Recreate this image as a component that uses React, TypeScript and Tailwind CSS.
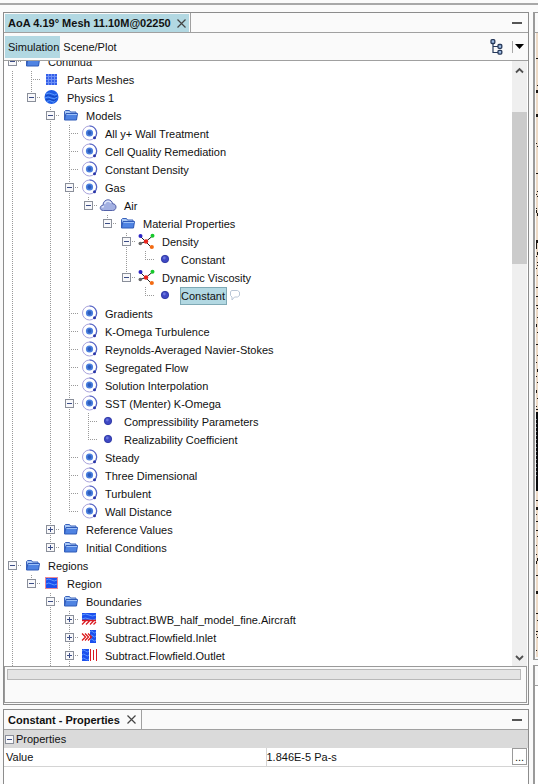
import React, { useState } from "react";

type IconName =
  | "folder" | "mesh" | "globe" | "model" | "cloud" | "molecule"
  | "dot" | "region" | "wall" | "inlet" | "outlet";

type Row = { level: number; icon: IconName; label: string; toggle?: "-" | "+"; selected?: boolean };

const rows: Row[] = [
  { level: 0, icon: "folder", label: "Continua", toggle: "-" },
  { level: 1, icon: "mesh", label: "Parts Meshes" },
  { level: 1, icon: "globe", label: "Physics 1", toggle: "-" },
  { level: 2, icon: "folder", label: "Models", toggle: "-" },
  { level: 3, icon: "model", label: "All y+ Wall Treatment" },
  { level: 3, icon: "model", label: "Cell Quality Remediation" },
  { level: 3, icon: "model", label: "Constant Density" },
  { level: 3, icon: "model", label: "Gas", toggle: "-" },
  { level: 4, icon: "cloud", label: "Air", toggle: "-" },
  { level: 5, icon: "folder", label: "Material Properties", toggle: "-" },
  { level: 6, icon: "molecule", label: "Density", toggle: "-" },
  { level: 7, icon: "dot", label: "Constant" },
  { level: 6, icon: "molecule", label: "Dynamic Viscosity", toggle: "-" },
  { level: 7, icon: "dot", label: "Constant", selected: true },
  { level: 3, icon: "model", label: "Gradients" },
  { level: 3, icon: "model", label: "K-Omega Turbulence" },
  { level: 3, icon: "model", label: "Reynolds-Averaged Navier-Stokes" },
  { level: 3, icon: "model", label: "Segregated Flow" },
  { level: 3, icon: "model", label: "Solution Interpolation" },
  { level: 3, icon: "model", label: "SST (Menter) K-Omega", toggle: "-" },
  { level: 4, icon: "dot", label: "Compressibility Parameters" },
  { level: 4, icon: "dot", label: "Realizability Coefficient" },
  { level: 3, icon: "model", label: "Steady" },
  { level: 3, icon: "model", label: "Three Dimensional" },
  { level: 3, icon: "model", label: "Turbulent" },
  { level: 3, icon: "model", label: "Wall Distance" },
  { level: 2, icon: "folder", label: "Reference Values", toggle: "+" },
  { level: 2, icon: "folder", label: "Initial Conditions", toggle: "+" },
  { level: 0, icon: "folder", label: "Regions", toggle: "-" },
  { level: 1, icon: "region", label: "Region", toggle: "-" },
  { level: 2, icon: "folder", label: "Boundaries", toggle: "-" },
  { level: 3, icon: "wall", label: "Subtract.BWB_half_model_fine.Aircraft", toggle: "+" },
  { level: 3, icon: "inlet", label: "Subtract.Flowfield.Inlet", toggle: "+" },
  { level: 3, icon: "outlet", label: "Subtract.Flowfield.Outlet", toggle: "+" },
];

// Levels whose next sibling lies below the visible part of the tree.
const openLevels = [0, 2, 3];

function continues(index: number, level: number) {
  for (let i = index + 1; i < rows.length; i++) {
    if (rows[i].level === level) return true;
    if (rows[i].level < level) return false;
  }
  return openLevels.includes(level);
}

function Waves({ x, y, w, h }: { x: number; y: number; w: number; h: number }) {
  const lines: React.ReactNode[] = [];
  for (let k = 2; k < h; k += 4) {
    lines.push(
      <path key={k} d={`M${x} ${y + k}q${w / 4} -2 ${w / 2} 0t${w / 2} 0`} fill="none" stroke="#5c98ff" strokeWidth="1" />
    );
  }
  return (
    <>
      <rect x={x} y={y} width={w} height={h} fill="#1c50ee" />
      {lines}
    </>
  );
}

function Icon({ name }: { name: IconName }) {
  return (
    <svg className="size-[18px] shrink-0" viewBox="0 0 18 18" aria-hidden="true">
      {name === "folder" && (
        <>
          <path d="M3.5 12.5v-8l1-1h4l1 1.5h5.5v7.5z" fill="#a9c8f6" stroke="#3a62bb" />
          <path d="M3.5 13l1.500-6.500h11.500l-1 6.500z" fill="#4f83e2" stroke="#2f5ab8" />
          <path d="M5.500 7.500h10.500" stroke="#9cc0f8" />
        </>
      )}
      {name === "mesh" && (
        <>
          <rect x="4" y="3" width="11" height="11" fill="#3560e8" />
          <path d="M4 5.500h11M4 8.500h11M4 11.500h11M6.500 3v11M9.500 3v11M12.500 3v11" stroke="#6f92f6" />
        </>
      )}
      {name === "globe" && (
        <>
          <circle cx="9.500" cy="8" r="7" fill="#1e5ce6" />
          <path d="M4 5q3-2 6 0t5 0M3 9q3-2 6 0t6.500-1M5 12.500q3-2 5 0t3-1" fill="none" stroke="#5796fb" strokeWidth="1" />
          <path d="M3.500 7q3-2 6 0t6 0M4 11q3-2 6 0t4-1" fill="none" stroke="#123fae" strokeWidth=".8" />
        </>
      )}
      {name === "model" && (
        <>
          <circle cx="9.500" cy="8" r="7" fill="#fff" stroke="#a9a3dc" />
          <path d="M9.500 1a7 7 0 0 1 5 12" fill="none" stroke="#5566c6" strokeWidth="1.200" />
          <circle cx="9.500" cy="8" r="3.600" fill="#4a7fdf" />
          <circle cx="9.500" cy="8" r="2" fill="#2c5cba" />
          <circle cx="14.500" cy="12.800" r="1.500" fill="#2a35a8" />
        </>
      )}
      {name === "cloud" && (
        <>
          <path
            d="M4.500 13.500C2 13.500 1 12 1.300 10.500 1.500 9 2.800 8.300 4 8.300 4 5 6.300 2.800 9 2.800c2.500 0 4.300 1.700 4.700 4 2-.1 3.300 1.400 3.300 3.200 0 2-1.300 3.500-3.500 3.500z"
            fill="#a3b0e2"
            stroke="#5361a8"
          />
          <path d="M5.500 7q.8-2.700 3.500-2.900 2 0 3 1.900M3 10.500q.5-1 2-1" fill="none" stroke="#dfe6fb" strokeWidth="1.400" />
        </>
      )}
      {name === "molecule" && (
        <>
          <path d="M3.500 3.500L15 15M15.500 3L9 8.500 3 10.500" stroke="#222" fill="none" />
          <circle cx="3.500" cy="3" r="2" fill="#2a24c4" />
          <circle cx="15.500" cy="2.800" r="2" fill="#17c82c" />
          <circle cx="9" cy="8.500" r="2.200" fill="#e8251c" />
          <circle cx="3.300" cy="10.500" r="1.800" fill="#666" />
          <circle cx="14.800" cy="14" r="2.100" fill="#f26a12" />
        </>
      )}
      {name === "dot" && (
        <>
          <circle cx="9" cy="8" r="3.700" fill="#3f48c4" stroke="#25309c" strokeWidth=".8" />
          <circle cx="8.300" cy="7" r="1.400" fill="#6a76de" />
        </>
      )}
      {name === "region" && (
        <>
          <Waves x={4} y={3} w={11} h={10} />
          <rect x="3.500" y="2.500" width="12" height="11" fill="none" stroke="#d3122f" strokeDasharray="1 1" />
        </>
      )}
      {name === "wall" && (
        <>
          <Waves x={2} y={2} w={14} h={7} />
          <path d="M2 9.500h14M2 13.500l3.500-3.500M6 13.500l3.500-3.500M10 13.500l3.500-3.500M13.500 13.500l2.500-2.500" stroke="#d91a22" strokeWidth="1.300" />
        </>
      )}
      {name === "inlet" && (
        <>
          <Waves x={10} y={1} w={6} h={13} />
          <path d="M2 4.500l3.500 3.500L2 11.500M5 4.500l3.500 3.500L5 11.500M8 4.500l3.500 3.500L8 11.500" fill="none" stroke="#dc1a1a" strokeWidth="1.300" />
        </>
      )}
      {name === "outlet" && (
        <>
          <Waves x={2} y={2} w={7} h={12} />
          <path d="M10.500 2v12M13.500 3v10M16.500 2v12" stroke="#d91a22" />
        </>
      )}
    </svg>
  );
}

const vDots = "bg-[repeating-linear-gradient(to_bottom,#999_0_1px,transparent_1px_2px)]";
const hDots = "bg-[repeating-linear-gradient(to_right,#999_0_1px,transparent_1px_2px)]";

function Toggle({ sign, label }: { sign: "-" | "+"; label: string }) {
  return (
    <button
      aria-label={`${sign === "-" ? "Collapse" : "Expand"} ${label}`}
      className="flex size-[9px] items-center justify-center border border-[#8a8f9a] bg-[#f8f8fa]"
    >
      <svg className="size-[7px]" viewBox="0 0 7 7" aria-hidden="true">
        <path d={sign === "-" ? "M1 3.500h5" : "M1 3.500h5M3.500 1v5"} stroke="#3b4d86" />
      </svg>
    </button>
  );
}

function TreeRow({ row, index }: { row: Row; index: number }) {
  const guides = Array.from({ length: row.level }, (_, k) => k);
  return (
    <li
      role="treeitem"
      aria-level={row.level + 1}
      aria-selected={!!row.selected}
      className="flex h-[18px] items-center whitespace-nowrap"
    >
      {guides.map((k) => (
        <span key={k} className="h-full w-[19px] shrink-0 pl-2">
          {continues(index, k) && <span className={`block h-full w-px ${vDots}`} />}
        </span>
      ))}
      <span className="relative h-full w-[19px] shrink-0 pl-2">
        {index > 0 && <span className={`block w-px ${vDots} ${continues(index, row.level) ? "h-full" : "h-2"}`} />}
        <span className={`absolute top-2 left-2 h-px w-2.5 ${hDots}`} />
        {row.toggle && (
          <span className="absolute top-1 left-1">
            <Toggle sign={row.toggle} label={row.label} />
          </span>
        )}
      </span>
      <Icon name={row.icon} />
      <span
        className={
          row.selected
            ? "ml-1.5 h-[18px] border border-[#7fa9b5] bg-[#b2d8e2] pr-px leading-4"
            : "ml-1.5 h-[18px] border border-transparent pr-px leading-4"
        }
      >
        {row.label}
      </span>
      {row.selected && (
        <svg className="ml-0.5 size-3" viewBox="0 0 12 12" aria-hidden="true">
          <path d="M2.500.500h6l2 1.500v3.500l-2 1.500h-3l-2.500 3v-3l-1.500-1.500v-3.500z" fill="#fff" stroke="#b9c6d6" />
        </svg>
      )}
    </li>
  );
}

function CloseIcon() {
  return (
    <svg className="size-[9px]" viewBox="0 0 9 9" aria-hidden="true">
      <path d="M.500.500l8 8M8.500.500l-8 8" stroke="#444" strokeWidth="1.200" />
    </svg>
  );
}

function MinimizeButton() {
  return (
    <button aria-label="Minimize" className="ml-auto flex w-[22px] items-center justify-center">
      <span className="h-0.5 w-2.5 bg-[#555]" />
    </button>
  );
}

function Chevron({ up }: { up?: boolean }) {
  return (
    <svg className="size-[15px]" viewBox="0 0 15 15" aria-hidden="true">
      <path d={up ? "M4 9.500l3.500-3.500L11 9.500" : "M4 5l3.500 3.500L11 5"} fill="none" stroke="#505050" strokeWidth="1.800" />
    </svg>
  );
}

// Top offset, left edge and width of the dark marks in the neighbouring view.
const specks = [
  [58, 0, 2], [85, 1, 1], [90, 0, 2], [114, 0, 2], [143, 0, 1], [146, 1, 1], [173, 0, 2], [191, 1, 1], [194, 0, 1],
  [196, 1, 1], [208, 0, 1], [210, 0, 1], [213, 1, 1], [240, 0, 2], [243, 0, 1], [246, 0, 1], [252, 1, 1],
  [256, 0, 1], [262, 1, 1], [265, 1, 1], [268, 0, 1], [275, 1, 1], [287, 0, 2], [296, 0, 2], [305, 0, 2],
  [308, 1, 1], [317, 1, 1], [324, 0, 1], [332, 1, 1], [344, 0, 2], [355, 1, 1], [362, 0, 1], [369, 1, 1],
  [376, 0, 1], [382, 1, 1], [390, 0, 1], [398, 1, 1], [406, 0, 1], [409, 0, 2], [500, 0, 2], [507, 0, 2],
  [514, 0, 1], [521, 0, 2], [530, 0, 2], [536, 1, 1], [545, 0, 1], [554, 0, 1], [558, 1, 1], [561, 0, 1],
  [575, 0, 2], [591, 0, 2], [613, 0, 2], [620, 1, 1], [631, 0, 2], [634, 0, 1], [637, 1, 1], [650, 0, 1],
];

function NeighbourView() {
  return (
    <svg className="h-[624px] w-full" viewBox="0 0 2 624" preserveAspectRatio="none" aria-hidden="true" shapeRendering="crispEdges">
      <rect width="2" height="624" fill="#eddac6" />
      {specks.map(([y, x, w]) => (
        <rect key={y} x={x} y={y - 33} width={w} height={y % 3 === 0 ? 3 : 1} fill="#1c1713" />
      ))}
      <rect y="379" width="2" height="79" fill="#0b0c0e" />
      <path d="M.500 386v60" stroke="#6d757c" strokeDasharray="1 3" />
    </svg>
  );
}

export default function App() {
  const [value, setValue] = useState("1.846E-5 Pa-s");
  return (
    <div className="flex min-h-screen flex-col bg-[#fafafa] font-['Liberation_Sans',Arial,sans-serif] text-[11px] leading-4 text-[#111]">
      <div className="h-[5px] shrink-0 border-b-2 border-[#a8a8a8]" />
      <div className="flex grow pt-[7px] pl-[3px]">
        <main className="flex min-w-0 grow flex-col gap-1">
          <section className="border border-[#8c8c8c]">
            <header className="flex h-5 border-b border-[#a0a0a0]">
              <div className="flex border-r border-[#a0a0a0] pt-px pr-px pl-px">
                <div className="flex items-center gap-1.5 bg-[#b2d8e2] pr-[3px] pl-[3px]">
                  <button className="font-bold whitespace-nowrap">AoA 4.19° Mesh 11.10M@02250</button>
                  <button aria-label="Close simulation"><CloseIcon /></button>
                </div>
              </div>
              <MinimizeButton />
            </header>
            <nav className="flex h-7 items-center border-b border-[#a0a0a0] pl-px">
              <button className="h-[22px] bg-[#b2d8e2] pr-px pl-[3px]">Simulation</button>
              <button className="h-[22px] px-[3px]">Scene/Plot</button>
              <button aria-label="Tree layout" className="ml-auto">
                <svg className="h-4 w-[13px]" viewBox="0 0 13 16" aria-hidden="true">
                  <path d="M3 4v9.500h5M3 7.500h5" fill="none" stroke="#27395a" strokeWidth="1.200" />
                  <g fill="#9dbbe2" stroke="#27395a" strokeWidth="1.300">
                    <rect x="1" y=".7" width="3.800" height="3.800" rx="1" />
                    <rect x="8" y="5.500" width="3.800" height="3.800" rx="1" />
                    <rect x="8" y="11.300" width="3.800" height="3.800" rx="1" />
                  </g>
                </svg>
              </button>
              <button aria-label="Layout options" className="mr-1 ml-[9px] flex h-3 items-center border-l border-[#a8a8a8] pl-0.5">
                <svg className="h-[5px] w-[9px]" viewBox="0 0 9 5" aria-hidden="true">
                  <path d="M0 0h9L4.500 5z" fill="#000" />
                </svg>
              </button>
            </nav>
            <div className="flex overflow-hidden bg-white">
              <ul role="tree" aria-label="Simulation" className="-mt-2 min-w-0 grow">
                {rows.map((row, i) => (
                  <TreeRow key={i} row={row} index={i} />
                ))}
                <li aria-hidden="true" className="flex h-px">
                  {[0, 1, 2, 3].map((k) => (
                    <span key={k} className="w-[19px] pl-2">
                      {openLevels.includes(k) && <span className={`block h-px w-px ${vDots}`} />}
                    </span>
                  ))}
                </li>
              </ul>
              <div className="mr-px flex w-[15px] shrink-0 flex-col bg-[#efefef]">
                <button aria-label="Scroll up" className="flex h-[51px] items-start pt-0.5"><Chevron up /></button>
                <div className="h-[152px] bg-[#cbcbcb]" />
                <button aria-label="Scroll down" className="mt-auto h-[15px]"><Chevron /></button>
              </div>
            </div>
            <footer className="mr-px mb-px h-[37px] border border-[#9a9a9a] pt-0.5 pr-[5px] pl-0.5">
              <div className="h-[11px] border border-[#b8b8b8] bg-[#e4e4e4]" />
            </footer>
          </section>

          <section className="flex grow flex-col border border-b-0 border-[#8c8c8c] bg-white">
            <header className="flex h-5 border-b border-[#a0a0a0] bg-[#fafafa]">
              <div className="flex items-center gap-[7px] border-r border-[#a0a0a0] pr-[5px] pl-1">
                <button className="font-bold whitespace-nowrap">Constant - Properties</button>
                <button aria-label="Close properties"><CloseIcon /></button>
              </div>
              <MinimizeButton />
            </header>
            <table className="w-full table-fixed border-collapse">
              <colgroup>
                <col className="w-1/2" />
                <col />
                <col className="w-4" />
              </colgroup>
              <tbody>
                <tr className="h-[18px] bg-[#dadada]">
                  <th colSpan={3} className="p-0 text-left font-normal">
                    <div className="flex items-center gap-0.5 pl-px">
                      <Toggle sign="-" label="Properties" />
                      Properties
                    </div>
                  </th>
                </tr>
                <tr className="h-[18px] border-b border-[#d4d4d4]">
                  <th scope="row" className="p-0 pl-0.5 text-left font-normal">
                    <label htmlFor="value">Value</label>
                  </th>
                  <td className="border-l border-[#d4d4d4] p-0">
                    <input
                      id="value"
                      value={value}
                      onChange={(e) => setValue(e.target.value)}
                      className="block h-4 w-full bg-transparent outline-none"
                    />
                  </td>
                  <td className="p-0 pr-px">
                    <button aria-label="Edit value" className="block h-[17px] w-[15px] border border-[#9a9a9a] bg-white leading-3">...</button>
                  </td>
                </tr>
              </tbody>
            </table>
          </section>
        </main>

        <aside className="ml-1 flex w-[5px] shrink-0 flex-col gap-[5px]">
          <div className="border-y border-l-2 border-[#9a9a9a]">
            <div className="h-5 border-b border-[#a0a0a0]" />
            <div className="pb-0.5 pl-px"><NeighbourView /></div>
          </div>
          <div className="grow border-t border-l-2 border-[#9a9a9a] bg-white">
            <div className="h-5 border-b border-[#a0a0a0] bg-[#fafafa]" />
          </div>
        </aside>
      </div>
    </div>
  );
}
